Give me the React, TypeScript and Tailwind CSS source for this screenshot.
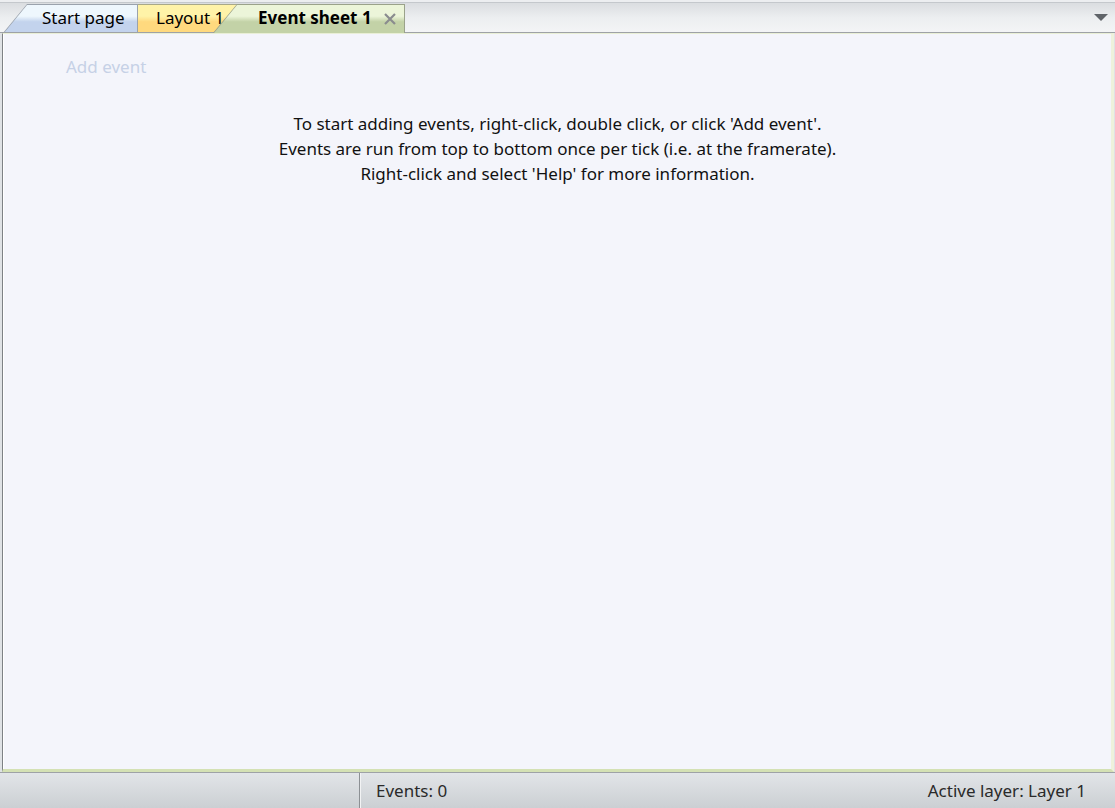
import React from 'react';

const font = { fontFamily: '"Noto Sans", "Open Sans", sans-serif' };

function Tabs() {
  return (
    <div className="relative h-[33px] bg-gradient-to-b from-[#d9dcdf] via-[#eceef0] to-[#f4f5f6] border-t-2 border-t-[#eceef0]">
      <div className="absolute left-0 right-0 top-0 h-px bg-[#c4c8cc]" />
      <div className="flex items-end h-full pl-[3px] pt-[2px]">
        {/* Start page */}
        <div className="relative h-[29px] w-[135px] bg-[#9aa2ac] [clip-path:polygon(0_100%,24px_0,100%_0,100%_100%)]">
          <div className="absolute inset-[1px_1px_0_1px] bg-gradient-to-b from-[#eef7fd] from-40% to-[#c3d3ed] to-60% [clip-path:polygon(0_100%,23px_0,100%_0,100%_100%)] pl-[38px] flex items-center text-[17px] text-black leading-none">
            <span className="-mt-[3px]">Start page</span>
          </div>
        </div>
        {/* Layout 1 */}
        <div className="relative h-[29px] w-[99px] bg-[#a8a888]">
          <div className="absolute inset-[1px_0_0_0] bg-gradient-to-b from-[#fff3a8] from-40% to-[#ffd97e] to-60% pl-[18px] flex items-center text-[17px] text-black leading-none">
            <span className="-mt-[3px]">Layout 1</span>
          </div>
        </div>
        {/* Event sheet 1 */}
        <div className="relative z-10 -ml-[24px] h-[29px] w-[192px] bg-[#9aa28a] [clip-path:polygon(0_100%,24px_0,100%_0,100%_100%)]">
          <div className="absolute inset-[1px_1px_0_1px] bg-gradient-to-b from-[#ecf5d9] from-40% to-[#c3d2a7] to-60% [clip-path:polygon(0_100%,23px_0,100%_0,100%_100%)] pl-[44px] pr-[7px] flex items-center justify-between text-[17px] text-black leading-none">
            <span className="-mt-[3px] font-bold">Event sheet 1</span>
            <svg width="14" height="14" viewBox="0 0 14 14" className="-mt-[1px]">
              <path d="M2 2 L12 12 M12 2 L2 12" stroke="#8a8c8e" strokeWidth="2.2" />
            </svg>
          </div>
        </div>
      </div>
      <svg width="14" height="8" viewBox="0 0 14 8" className="absolute right-[7px] top-[12px]">
        <path d="M0 0 H14 L7 7 Z" fill="#5f6368" />
      </svg>
      <div className="absolute left-0 right-0 bottom-0 h-px bg-[#9ea2a6]" />
    </div>
  );
}

function Content() {
  return (
    <div className="flex-1 flex bg-[#dfe2e5] pl-[2px] pr-[1px]">
      <div className="flex-1 flex border-l border-l-[#7d8185] border-b-[3px] border-b-[#d4e1b4] border-r-[3px] border-r-[#eef2dc] border-t border-t-[#e9efd6]">
        <div className="flex-1 bg-[#f4f5fb] border-l border-l-white relative">
          <div className="absolute left-[62px] top-[20px] text-[17px] text-[#c6d1e6]">Add event</div>
          <div className="pt-[77px] text-center text-[17px] leading-[25px] text-[#111]">
            <div>To start adding events, right-click, double click, or click 'Add event'.</div>
            <div>Events are run from top to bottom once per tick (i.e. at the framerate).</div>
            <div>Right-click and select 'Help' for more information.</div>
          </div>
        </div>
      </div>
    </div>
  );
}

function StatusBar() {
  return (
    <div className="h-[36px] flex border-t border-t-[#9ea2a6] bg-gradient-to-b from-[#e2e5e8] to-[#cbcfd3] text-[17px] text-[#2a2a2a]">
      <div className="w-[360px] border-r border-r-[#8c9094]" />
      <div className="flex-1 flex items-center justify-between border-l border-l-[#f2f3f4] pl-[15px] pr-[29px]">
        <span>Events: 0</span>
        <span>Active layer: Layer 1</span>
      </div>
    </div>
  );
}

export default function App() {
  return (
    <div className="w-[1115px] h-[808px] flex flex-col bg-[#dfe2e5] overflow-hidden" style={font}>
      <Tabs />
      <Content />
      <StatusBar />
    </div>
  );
}
